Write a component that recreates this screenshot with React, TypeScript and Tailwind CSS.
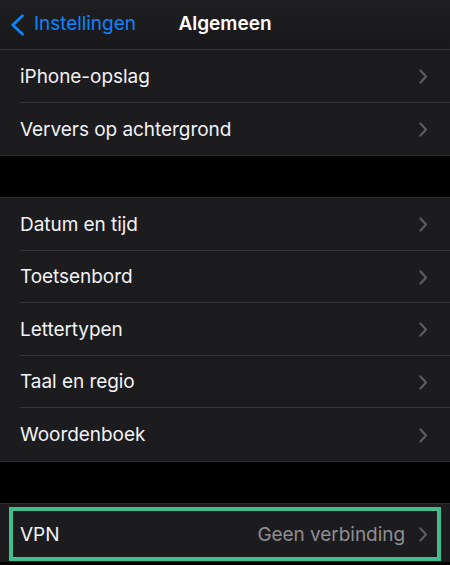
import React from "react";

const font = { fontFamily: "Inter, 'Liberation Sans', sans-serif" };

function Chevron() {
  return (
    <svg width="9" height="15" viewBox="0 0 9 15" className="shrink-0">
      <path d="M1.5 1.5 L7 7.5 L1.5 13.5" fill="none" stroke="#5b5b60" strokeWidth="2.2" strokeLinecap="round" strokeLinejoin="round" />
    </svg>
  );
}

function Row({ label, value, last, h = "h-[52.5px]" }: { label: string; value?: string; last?: boolean; h?: string }) {
  return (
    <div className={`flex ${h} pl-5 bg-[#1c1c1e]`}>
      <div className={`flex flex-1 items-center pr-[22px] pt-[2px] ${last ? "" : "border-b border-[#363638]"}`}>
        <span className="flex-1 text-[19px] text-[#f2f2f7] tracking-[-0.05px]">{label}</span>
        {value && <span className="mr-[14px] text-[19px] text-[#8e8e93] tracking-[-0.05px]">{value}</span>}
        <Chevron />
      </div>
    </div>
  );
}

export default function App() {
  return (
    <div className="w-[450px] h-[565px] overflow-hidden bg-black" style={font}>
      {/* nav bar */}
      <header className="relative flex h-[50px] items-center border-b border-[#38383a] bg-gradient-to-b from-[#1f1f21] to-[#18181a]">
        <div className="flex items-center gap-[9px] pl-[10px]">
          <svg width="15" height="22" viewBox="0 0 15 22">
            <path d="M12.5 1.8 L2.8 11 L12.5 20.2" fill="none" stroke="#0a84ff" strokeWidth="2.8" strokeLinecap="round" strokeLinejoin="round" />
          </svg>
          <span className="text-[19px] text-[#0a84ff] tracking-[-0.05px]">Instellingen</span>
        </div>
        <span className="absolute left-0 right-0 text-center text-[19px] font-semibold text-white pointer-events-none">
          Algemeen
        </span>
      </header>

      <section className="border-b border-[#2a2a2c]">
        <Row label="iPhone-opslag" />
        <Row label="Ververs op achtergrond" last />
      </section>

      <div className="h-[41px]" />

      <section className="border-y border-[#2a2a2c]">
        <Row label="Datum en tijd" h="h-[52.6px]" />
        <Row label="Toetsenbord" h="h-[52.6px]" />
        <Row label="Lettertypen" h="h-[52.6px]" />
        <Row label="Taal en regio" h="h-[52.6px]" />
        <Row label="Woordenboek" h="h-[52.6px]" last />
      </section>

      <div className="h-[41px]" />

      <section className="relative border-t border-[#2a2a2c]">
        <div className="pt-[2px] bg-[#1c1c1e]">
          <Row label="VPN" value="Geen verbinding" last h="h-[56px]" />
        </div>
        <div className="absolute left-[9px] right-[9px] top-[3px] h-[54px] border-4 border-[#41bd90]" />
      </section>
    </div>
  );
}
